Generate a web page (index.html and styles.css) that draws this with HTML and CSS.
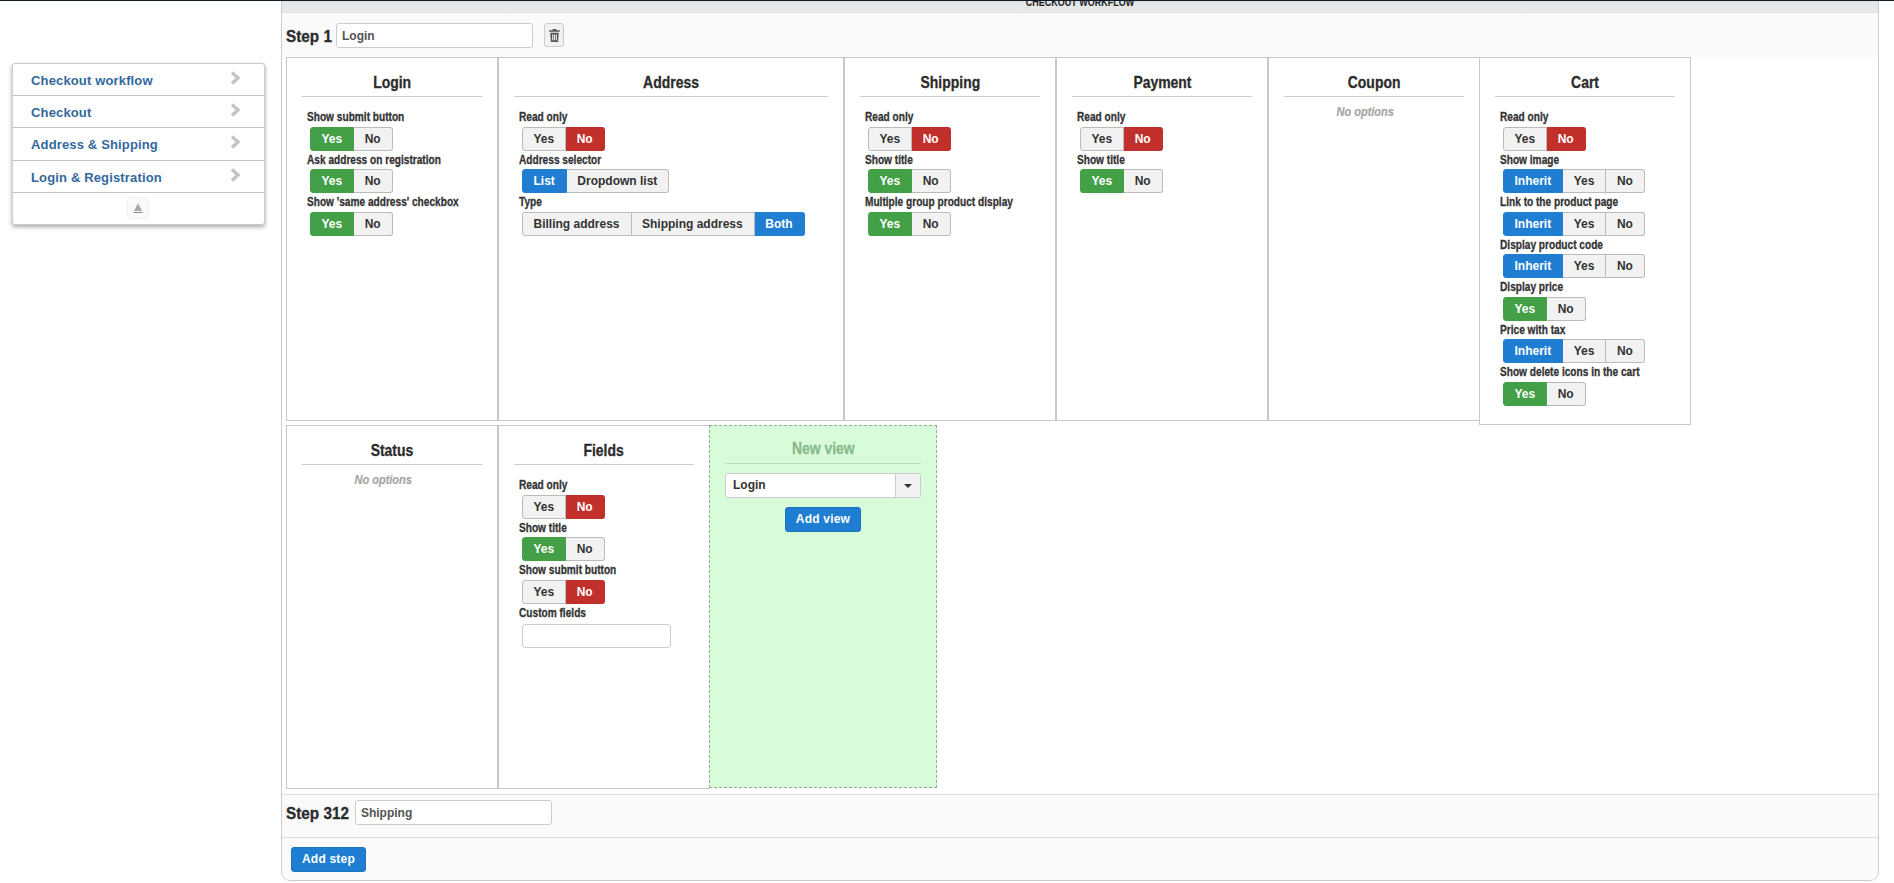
FILE: index.html
```html
<!DOCTYPE html>
<html lang="en">
<head>
<meta charset="utf-8">
<title>Checkout workflow</title>
<link rel="stylesheet" href="styles.css">
</head>
<body>
<div class="topline"></div>
<div class="page">
  <aside class="sidebar">
    <nav class="menu">
      <a class="menu-item">Checkout workflow<svg class="chev" viewBox="0 0 10 14"><path d="M2 1.5 8 7l-6 5.5"/></svg></a>
      <a class="menu-item">Checkout<svg class="chev" viewBox="0 0 10 14"><path d="M2 1.5 8 7l-6 5.5"/></svg></a>
      <a class="menu-item">Address &amp; Shipping<svg class="chev" viewBox="0 0 10 14"><path d="M2 1.5 8 7l-6 5.5"/></svg></a>
      <a class="menu-item">Login &amp; Registration<svg class="chev" viewBox="0 0 10 14"><path d="M2 1.5 8 7l-6 5.5"/></svg></a>
      <div class="menu-foot"><span class="collapse"><svg viewBox="0 0 12 12" width="12" height="12"><path class="collapse-tri" d="M6 1 10 9H2z"/><path class="collapse-bar" d="M1.5 10.5h9"/></svg></span></div>
    </nav>
  </aside>
  <main class="panel">
    <header class="panel-head"><span>CHECKOUT WORKFLOW</span></header>
    <div class="step-head">
      <span class="step-title">Step 1</span>
      <input class="text-input" value="Login">
      <span class="trash"><svg viewBox="0 0 12 14" width="13" height="15"><path d="M4.500 1h3l.6 1.200H11v1.300H1V2.200h2.900zM2 4.500h8l-.6 8.500H2.600zM3.800 6v5.500h1V6zm1.700 0v5.500h1V6zm1.700 0v5.500h1V6z"/></svg></span>
    </div>
    <div class="views">
      <section class="view">
        <h3><span>Login</span></h3>
        <div class="label">Show submit button</div>
        <div class="group"><span class="on-green">Yes</span><span>No</span></div>
        <div class="label">Ask address on registration</div>
        <div class="group"><span class="on-green">Yes</span><span>No</span></div>
        <div class="label">Show 'same address' checkbox</div>
        <div class="group"><span class="on-green">Yes</span><span>No</span></div>
      </section>
      <section class="view wide">
        <h3><span>Address</span></h3>
        <div class="label">Read only</div>
        <div class="group"><span>Yes</span><span class="on-red">No</span></div>
        <div class="label">Address selector</div>
        <div class="group"><span class="on-blue">List</span><span>Dropdown list</span></div>
        <div class="label">Type</div>
        <div class="group"><span>Billing address</span><span>Shipping address</span><span class="on-blue">Both</span></div>
      </section>
      <section class="view">
        <h3><span>Shipping</span></h3>
        <div class="label">Read only</div>
        <div class="group"><span>Yes</span><span class="on-red">No</span></div>
        <div class="label">Show title</div>
        <div class="group"><span class="on-green">Yes</span><span>No</span></div>
        <div class="label">Multiple group product display</div>
        <div class="group"><span class="on-green">Yes</span><span>No</span></div>
      </section>
      <section class="view">
        <h3><span>Payment</span></h3>
        <div class="label">Read only</div>
        <div class="group"><span>Yes</span><span class="on-red">No</span></div>
        <div class="label">Show title</div>
        <div class="group"><span class="on-green">Yes</span><span>No</span></div>
      </section>
      <section class="view">
        <h3><span>Coupon</span></h3>
        <p class="no-options">No options</p>
      </section>
      <section class="view cart">
        <h3><span>Cart</span></h3>
        <div class="label">Read only</div>
        <div class="group"><span>Yes</span><span class="on-red">No</span></div>
        <div class="label">Show image</div>
        <div class="group"><span class="on-blue">Inherit</span><span>Yes</span><span>No</span></div>
        <div class="label">Link to the product page</div>
        <div class="group"><span class="on-blue">Inherit</span><span>Yes</span><span>No</span></div>
        <div class="label">Display product code</div>
        <div class="group"><span class="on-blue">Inherit</span><span>Yes</span><span>No</span></div>
        <div class="label">Display price</div>
        <div class="group"><span class="on-green">Yes</span><span>No</span></div>
        <div class="label">Price with tax</div>
        <div class="group"><span class="on-blue">Inherit</span><span>Yes</span><span>No</span></div>
        <div class="label">Show delete icons in the cart</div>
        <div class="group"><span class="on-green">Yes</span><span>No</span></div>
      </section>
      <section class="view">
        <h3><span>Status</span></h3>
        <p class="no-options">No options</p>
      </section>
      <section class="view">
        <h3><span>Fields</span></h3>
        <div class="label">Read only</div>
        <div class="group"><span>Yes</span><span class="on-red">No</span></div>
        <div class="label">Show title</div>
        <div class="group"><span class="on-green">Yes</span><span>No</span></div>
        <div class="label">Show submit button</div>
        <div class="group"><span>Yes</span><span class="on-red">No</span></div>
        <div class="label">Custom fields</div>
        <input class="custom-input">
      </section>
      <section class="new-view">
        <h3><span>New view</span></h3>
        <div class="select"><span class="select-value">Login</span><span class="select-arrow"><i></i></span></div>
        <div class="center"><span class="action">Add view</span></div>
      </section>
    </div>
    <div class="step-row">
      <span class="step-title">Step 312</span>
      <input class="text-input" value="Shipping">
    </div>
    <div class="panel-foot"><span class="action">Add step</span></div>
  </main>
</div>
</body>
</html>
```
FILE: styles.css
```css
* { box-sizing: border-box; }
html, body { margin: 0; padding: 0; height: 883px; overflow: hidden; background: #fff; }
body { font-family: "Liberation Sans", Arial, sans-serif; color: #333; }
.topline { height: 1px; background: #0d1b26; }
.page { display: flex; align-items: flex-start; }
.sidebar { width: 281px; padding: 62px 0 0 12px; flex: none; }
.menu { width: 253px; background: #fff; border: 1px solid #ccc; border-radius: 3px; box-shadow: 0 2px 4px rgba(0,0,0,.35); }
.menu-item { display: flex; justify-content: space-between; align-items: center; height: 32.2px; padding: 2px 24px 0 18px; border-bottom: 1px solid #c4c4c4; font-size: 13px; font-weight: 700; letter-spacing: .15px; color: #33689c; }
.chev { width: 10px; height: 14px; fill: none; stroke: #c4c4c4; stroke-width: 3.5; margin-top: -5px; }
.menu-foot { height: 31px; display: flex; justify-content: center; align-items: center; }
.collapse { width: 20px; height: 20px; display: flex; align-items: center; justify-content: center; border-radius: 3px; background: #fafafa; box-shadow: 0 0 2px rgba(0,0,0,.2); margin-left: -2px; }
.collapse-tri { fill: #aaa; }
.collapse-bar { stroke: #888; stroke-width: 1; }
.panel { width: 1598px; height: 880px; display: flex; flex-direction: column; border-right: 1px solid #ccc; border-left: 1px solid #ccc; border-bottom: 1px solid #ccc; border-radius: 0 0 9px 9px; overflow: hidden; background: #fff; }
.panel-head { height: 12px; flex: none; background: linear-gradient(#e0e3e5, #e9eaeb); border-bottom: 1px solid #e3dfdb; text-align: center; font-size: 11px; font-weight: 700; color: #222; line-height: 10px; overflow: hidden; }
.panel-head span { display: block; margin-top: -4px; transform: scaleX(.82); }
.step-head { height: 44px; flex: none; display: flex; align-items: flex-start; padding: 10px 0 0 4px; background: #fafafa; }
.step-title { font-size: 17px; font-weight: 700; color: #2b2b2b; line-height: 27px; margin-right: -1px; transform: scaleX(.9); transform-origin: left; -webkit-text-stroke: .3px #2b2b2b; }
.text-input { width: 197px; height: 25px; padding: 0 5px; background: #fff; border: 1px solid #ccc; border-radius: 3px; font: 700 12px "Liberation Sans", sans-serif; color: #555; }
.trash { width: 20px; height: 24px; margin-left: 11px; display: flex; align-items: center; justify-content: center; background: #f2f2f2; border: 1px solid #ccc; border-radius: 3px; }
.trash path { fill: #555; fill-rule: evenodd; }
.views { height: 737px; flex: none; display: flex; flex-wrap: wrap; align-items: flex-start; align-content: flex-start; padding-left: 4px; }
.view { width: 212px; height: 364px; border: 1px solid #c8c8c8; padding: 0 15px; }
.view.wide { width: 346px; }
.view.cart { height: 368px; margin-left: -1px; }
h3 { margin: 0 0 11px; height: 39px; font-size: 17px; line-height: 49px; font-weight: 700; text-align: center; color: #2b2b2b; border-bottom: 1px solid #ccc; }
h3 span { display: inline-block; transform: scaleX(.82); -webkit-text-stroke: .3px currentColor; }
.label { height: 18.500px; margin-left: 5px; font-size: 12.500px; line-height: 18px; font-weight: 700; color: #333; white-space: nowrap; transform: scaleX(.81); transform-origin: left; -webkit-text-stroke: .3px #333; }
.group { display: flex; height: 24px; margin-left: 8px; width: max-content; }
.group span { display: block; height: 24px; padding: 0 11px 0 10.500px; font-size: 12px; font-weight: 700; line-height: 22px; color: #333; background: #f2f2f2; border: 1px solid #bbb; border-left-width: 0; }
.group span:first-child { border-left-width: 1px; border-radius: 3px 0 0 3px; }
.group span:last-child { border-radius: 0 3px 3px 0; }
.group .on-green { background: #43a047; border-color: #43a047; color: #fff; }
.group .on-red { background: #c1302b; border-color: #c1302b; color: #fff; }
.group .on-blue { background: #1f7ed2; border-color: #1f7ed2; color: #fff; }
.no-options { margin: -3px 0 0; padding-right: 20px; font-size: 12.500px; font-style: italic; font-weight: 700; color: #a6a6a6; text-align: center; transform: scaleX(.88); -webkit-text-stroke: .2px #a6a6a6; }
.custom-input { display: block; width: 149px; height: 24px; margin-left: 8px; margin-top: 2px; border: 1px solid #ccc; border-radius: 3px; background: #fff; }
.new-view { width: 228px; height: 363px; margin-left: -1px; padding: 0 15px; background: #d8fcd9; border: 1px dashed #8fae92; }
.new-view h3 { color: #8ab98d; border-bottom-color: #c2d9c4; height: 38px; line-height: 45px; margin-bottom: 9px; }
.select { display: flex; height: 25px; border: 1px solid #ccc; border-radius: 3px; background: #fff; font-size: 12px; font-weight: 700; line-height: 23px; color: #333; }
.select-value { flex: 1; padding-left: 7px; }
.select-arrow { width: 25px; display: flex; align-items: center; justify-content: center; background: #f2f2f2; border-left: 1px solid #ccc; border-radius: 0 3px 3px 0; }
.select-arrow i { border: 4px solid transparent; border-top-color: #333; border-bottom-width: 0; }
.center { display: flex; justify-content: center; margin-top: 9px; }
.action { display: block; height: 25px; padding: 0 10px; background: #1f7ed2; border: 1px solid #1b72bf; border-radius: 3px; font-size: 12px; font-weight: 700; line-height: 23px; letter-spacing: .2px; color: #fff; }
.step-row { height: 44px; flex: none; display: flex; align-items: flex-start; padding: 5px 0 0 4px; background: #fafafa; border-top: 1px solid #ddd; border-bottom: 1px solid #ddd; }
.panel-foot { flex: 1; padding: 9px 0 0 9px; background: #fafafa; display: flex; align-items: flex-start; }
```
